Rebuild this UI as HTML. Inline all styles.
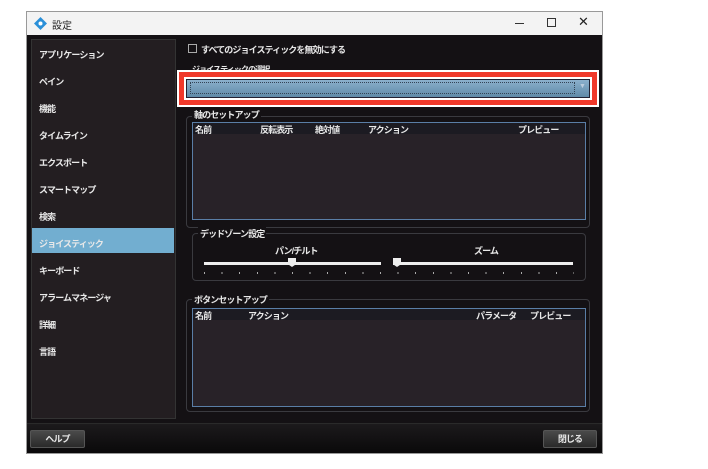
<!DOCTYPE html><html><head><meta charset="utf-8"><style>
*{margin:0;padding:0;box-sizing:border-box}
body{width:708px;height:469px;background:#fff;position:relative;overflow:hidden;font-family:"Liberation Sans","Noto Sans CJK JP",sans-serif;font-size:9px;letter-spacing:-0.9px;color:#e8e8e8;font-weight:bold}
.a{position:absolute}
.win{left:26px;top:11px;width:577px;height:443px;background:#141114;border:1px solid #999}
.title{left:0;top:0;width:575px;height:23px;background:#f3f3f3;color:#222;font-weight:normal;font-size:10px;letter-spacing:0}
.side{left:31px;top:39px;width:145px;height:380px;background:#231e21;border:1px solid #333}
.it{position:absolute;left:8px}
.sel{left:32px;top:228px;width:142px;height:25px;background:#72aed0}
.grp{border:1px solid #3a3a3f;border-radius:4px}
.tbl{background:#282228;border:1px solid #5a7ea6}
.th{position:absolute;top:0;left:0;right:0;height:11px;background:#1c1b22}
.btn{background:linear-gradient(#4a4a4a,#2a2a2a);border:1px solid #555;border-radius:2px;text-align:center;line-height:16px}
</style></head><body>
<div class="a win">
 <div class="a title">
  <svg class="a" style="left:7px;top:5px" width="13" height="13" viewBox="0 0 13 13"><path d="M6.5 0L13 6.5 6.5 13 0 6.5Z" fill="#2a8fd8"/><circle cx="6.5" cy="6.5" r="2" fill="#fff"/></svg>
  <span class="a" style="left:25px;top:5px">設定</span>
  <div class="a" style="left:488px;top:11px;width:9px;height:1px;background:#333"></div>
  <div class="a" style="left:520px;top:6px;width:9px;height:9px;border:1px solid #333"></div>
  <span class="a" style="left:551px;top:2px;font-size:13px">✕</span>
 </div>
</div>
<div class="a side"></div>
<div class="a sel"></div>
<div class="a" style="left:31px;top:48px;width:145px">
<div class="it" style="top:0">アプリケーション</div><div class="it" style="top:27px">ペイン</div><div class="it" style="top:54px">機能</div><div class="it" style="top:81px">タイムライン</div><div class="it" style="top:108px">エクスポート</div><div class="it" style="top:135px">スマートマップ</div><div class="it" style="top:162px">検索</div><div class="it" style="top:189px">ジョイスティック</div><div class="it" style="top:216px">キーボード</div><div class="it" style="top:243px">アラームマネージャ</div><div class="it" style="top:270px">詳細</div><div class="it" style="top:297px">言語</div>
</div>
<div class="a" style="left:188px;top:44px;width:9px;height:9px;border:1px solid #aaa"></div>
<span class="a" style="left:201px;top:43px">すべてのジョイスティックを無効にする</span>
<span class="a" style="left:192px;top:64px;font-size:8px">ジョイスティックの選択</span>
<div class="a" style="left:177px;top:70px;width:422px;height:37px;background:#fff"></div>
<div class="a" style="left:179px;top:72px;width:418px;height:33px;background:#f0392b"></div>
<div class="a" style="left:184px;top:77px;width:408px;height:23px;background:#fff"></div>
<div class="a" style="left:186px;top:79px;width:404px;height:19px;background:linear-gradient(#8bb0cc,#5f8aa8);border:1px solid #223"></div>
<div class="a" style="left:190px;top:82px;width:385px;height:12px;border:1px dotted #345"></div>
<span class="a" style="left:579px;top:83px;font-size:7px;color:#bcd">▼</span>
<div class="a grp" style="left:186px;top:116px;width:404px;height:112px"></div>
<span class="a" style="left:192px;top:108px;background:#141114;padding:0 2px">軸のセットアップ</span>
<div class="a tbl" style="left:192px;top:122px;width:394px;height:98px"><div class="th"></div>
<span class="a" style="left:2px;top:0">名前</span><span class="a" style="left:67px;top:0">反転表示</span><span class="a" style="left:122px;top:0">絶対値</span><span class="a" style="left:175px;top:0">アクション</span><span class="a" style="left:325px;top:0">プレビュー</span></div>
<div class="a grp" style="left:192px;top:233px;width:394px;height:48px"></div>
<span class="a" style="left:198px;top:227px;background:#141114;padding:0 2px">デッドゾーン設定</span>
<span class="a" style="left:275px;top:244px">パン/チルト</span><span class="a" style="left:474px;top:244px">ズーム</span>
<div class="a" style="left:204px;top:262px;width:177px;height:3px;background:#eee"></div>
<div class="a" style="left:393px;top:262px;width:180px;height:3px;background:#eee"></div>
<div class="a" style="left:288px;top:258px;width:8px;height:9px;background:#eee;clip-path:polygon(0 0,100% 0,100% 70%,50% 100%,0 70%)"></div>
<div class="a" style="left:393px;top:258px;width:8px;height:9px;background:#eee;clip-path:polygon(0 0,100% 0,100% 70%,50% 100%,0 70%)"></div>
<div class="a" style="left:204px;top:272px;width:370px;height:2px;background:repeating-linear-gradient(90deg,#aaa 0 1px,transparent 1px 17.6px)"></div>
<div class="a grp" style="left:186px;top:299px;width:404px;height:113px"></div>
<span class="a" style="left:192px;top:293px;background:#141114;padding:0 2px">ボタンセットアップ</span>
<div class="a tbl" style="left:192px;top:308px;width:394px;height:99px"><div class="th"></div>
<span class="a" style="left:2px;top:0">名前</span><span class="a" style="left:55px;top:0">アクション</span><span class="a" style="left:283px;top:0">パラメータ</span><span class="a" style="left:337px;top:0">プレビュー</span></div>
<div class="a" style="left:27px;top:423px;width:575px;height:30px;background:linear-gradient(#1c1a1c,#0a090a);border-top:1px solid #2a2a2a"></div>
<div class="a btn" style="left:30px;top:430px;width:55px;height:18px">ヘルプ</div>
<div class="a btn" style="left:543px;top:430px;width:54px;height:18px">閉じる</div>
</body></html>
